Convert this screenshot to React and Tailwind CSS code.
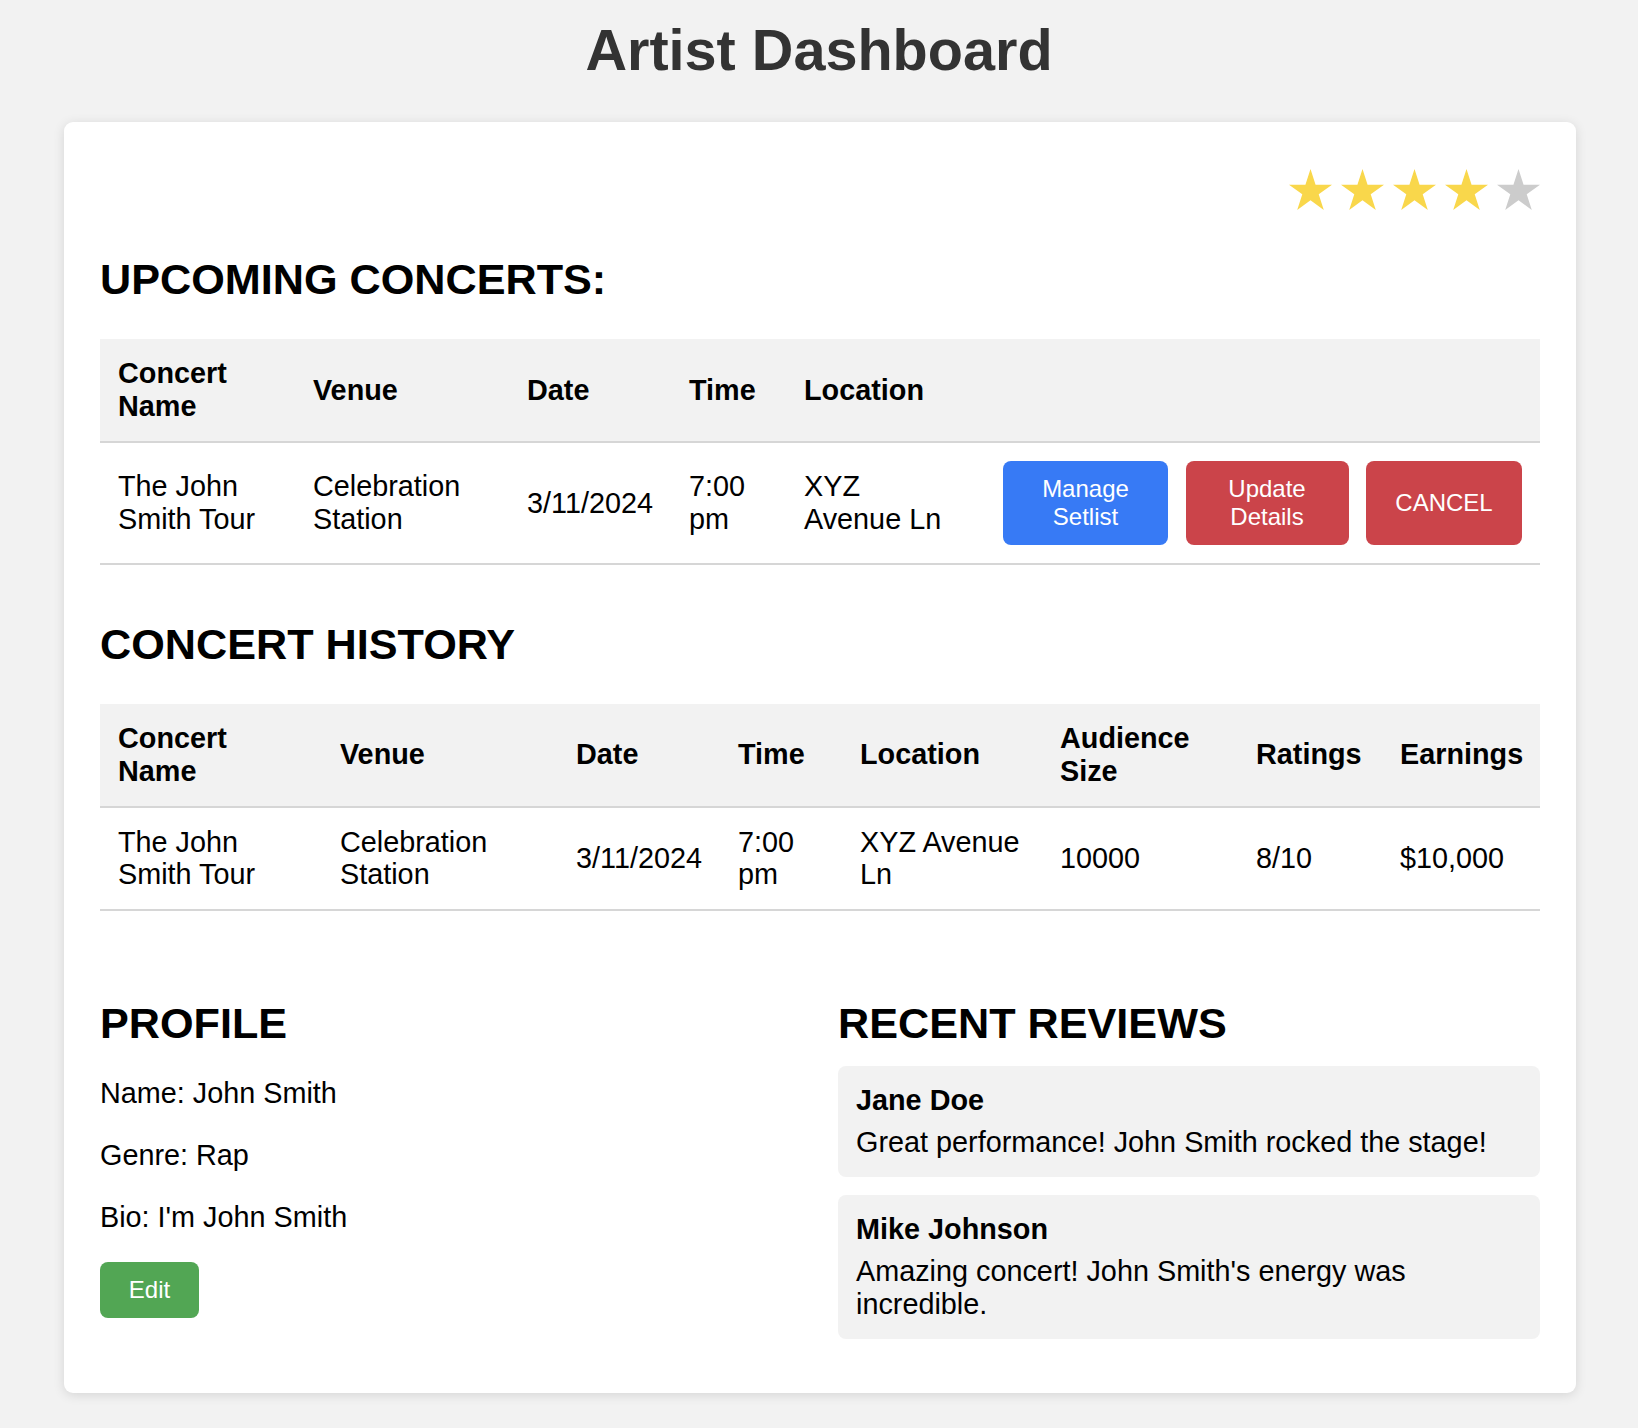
import React from "react";

// Estrella de cinco puntas para la valoración
function Star({ filled }) {
  return (
    <svg
      width="43"
      height="41"
      viewBox="2.45 0 95.1 90.45"
      className={filled ? "fill-[#f9d74b]" : "fill-[#cccccc]"}
    >
      <polygon points="50,0 61.23,34.55 97.55,34.55 68.16,55.9 79.39,90.45 50,69.1 20.61,90.45 31.84,55.9 2.45,34.55 38.77,34.55" />
    </svg>
  );
}

const th =
  "text-left align-middle font-bold text-[28.8px] leading-[33px] px-[18px] py-[18px] bg-[#f2f2f2] border-b-2 border-[#d6d6d6]";
const td =
  "text-left align-middle text-[28.8px] leading-[32.5px] px-[18px] py-[18px] border-b-2 border-[#d6d6d6]";
const btn =
  "text-white text-[24px] leading-[27.6px] py-[14.4px] px-[28.8px] rounded-[8px] text-center";
const h2 = "text-[43.2px] leading-[50px] font-bold";

const reviews = [
  { name: "Jane Doe", text: "Great performance! John Smith rocked the stage!" },
  { name: "Mike Johnson", text: "Amazing concert! John Smith's energy was incredible." },
];

export default function App() {
  const rating = 4;

  return (
    <div className="min-h-screen bg-[#f2f2f2] font-['Liberation_Sans',Arial,sans-serif] text-black pt-[17px] pb-[35px]">
      <h1 className="text-center text-[57.6px] leading-[66px] font-bold text-[#333333]">
        Artist Dashboard
      </h1>

      <div className="mt-[39px] ml-[64px] w-[1512px] bg-white rounded-[9px] shadow-[0_2px_12px_rgba(0,0,0,0.12)] px-[36px] pt-[36px] pb-[36px]">
        {/* Valoración */}
        <div className="h-[62px] flex items-center justify-end gap-[9px]">
          {[1, 2, 3, 4, 5].map((n) => (
            <Star key={n} filled={n <= rating} />
          ))}
        </div>

        {/* Próximos conciertos */}
        <h2 className={h2 + " mt-[34px] mb-[35px]"}>UPCOMING CONCERTS:</h2>
        <table className="w-full table-fixed border-collapse">
          <colgroup>
            <col className="w-[195px]" />
            <col className="w-[214px]" />
            <col className="w-[162px]" />
            <col className="w-[115px]" />
            <col className="w-[182px]" />
            <col className="w-[572px]" />
          </colgroup>
          <thead>
            <tr>
              <th className={th}>Concert Name</th>
              <th className={th}>Venue</th>
              <th className={th}>Date</th>
              <th className={th}>Time</th>
              <th className={th}>Location</th>
              <th className={th}></th>
            </tr>
          </thead>
          <tbody>
            <tr>
              <td className={td}>The John Smith Tour</td>
              <td className={td}>Celebration Station</td>
              <td className={td + " whitespace-nowrap"}>3/11/2024</td>
              <td className={td}>7:00 pm</td>
              <td className={td}>XYZ Avenue Ln</td>
              <td className={td + " !pl-[35px]"}>
                <div className="flex items-stretch gap-[17.5px]">
                  <button className={btn + " w-[165px] bg-[#377af5]"}>Manage Setlist</button>
                  <button className={btn + " w-[163px] bg-[#cb444a]"}>Update Details</button>
                  <button className={btn + " w-[156px] bg-[#cb444a]"}>CANCEL</button>
                </div>
              </td>
            </tr>
          </tbody>
        </table>

        {/* Historial */}
        <h2 className={h2 + " mt-[54px] mb-[35px]"}>CONCERT HISTORY</h2>
        <table className="w-full table-fixed border-collapse">
          <colgroup>
            <col className="w-[222px]" />
            <col className="w-[236px]" />
            <col className="w-[162px]" />
            <col className="w-[122px]" />
            <col className="w-[200px]" />
            <col className="w-[196px]" />
            <col className="w-[144px]" />
            <col className="w-[158px]" />
          </colgroup>
          <thead>
            <tr>
              <th className={th}>Concert Name</th>
              <th className={th}>Venue</th>
              <th className={th}>Date</th>
              <th className={th}>Time</th>
              <th className={th}>Location</th>
              <th className={th}>Audience Size</th>
              <th className={th + " whitespace-nowrap"}>Ratings</th>
              <th className={th + " whitespace-nowrap"}>Earnings</th>
            </tr>
          </thead>
          <tbody>
            <tr>
              <td className={td}>The John Smith Tour</td>
              <td className={td}>Celebration Station</td>
              <td className={td + " whitespace-nowrap"}>3/11/2024</td>
              <td className={td}>7:00 pm</td>
              <td className={td}>XYZ Avenue Ln</td>
              <td className={td}>10000</td>
              <td className={td}>8/10</td>
              <td className={td}>$10,000</td>
            </tr>
          </tbody>
        </table>

        {/* Perfil y reseñas */}
        <div className="mt-[87px] mb-[18px] grid grid-cols-2 gap-x-[36px] items-start">
          <div>
            <h2 className={h2 + " mb-[28px]"}>PROFILE</h2>
            <p className="text-[28.8px] leading-[34px] mb-[28px]">Name: John Smith</p>
            <p className="text-[28.8px] leading-[34px] mb-[28px]">Genre: Rap</p>
            <p className="text-[28.8px] leading-[34px] mb-[28px]">Bio: I'm John Smith</p>
            <button className={btn + " bg-[#52a654]"}>Edit</button>
          </div>
          <div>
            <h2 className={h2 + " mb-[18px]"}>RECENT REVIEWS</h2>
            <div className="flex flex-col gap-[18px]">
              {reviews.map((r) => (
                <div key={r.name} className="bg-[#f2f2f2] rounded-[8px] p-[18px]">
                  <p className="font-bold text-[28.8px] leading-[33px] mb-[9px]">{r.name}</p>
                  <p className="text-[28.8px] leading-[33px]">{r.text}</p>
                </div>
              ))}
            </div>
          </div>
        </div>
      </div>
    </div>
  );
}
